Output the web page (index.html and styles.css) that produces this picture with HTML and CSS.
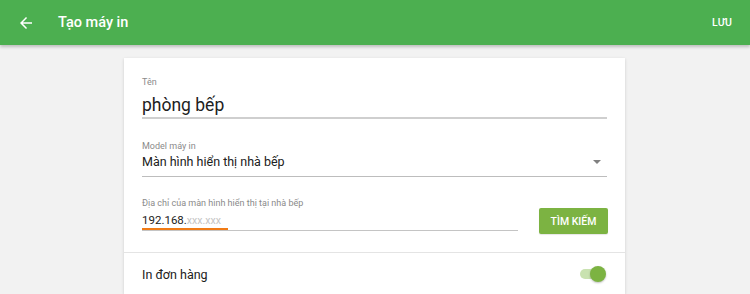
FILE: index.html
```html
<!DOCTYPE html>
<html lang="vi">
<head>
<meta charset="utf-8">
<title>Tạo máy in</title>
<link rel="stylesheet" href="styles.css">
</head>
<body>
<header class="appbar">
  <svg class="back" viewBox="0 0 24 24" width="18" height="18"><path d="M20 11H7.83l5.59-5.59L12 4l-8 8 8 8 1.41-1.41L7.83 13H20v-2z" fill="#fff"/></svg>
  <h1 class="title">Tạo máy in</h1>
  <span class="save">LƯU</span>
</header>
<main class="content">
  <section class="card">
    <div class="field field-name">
      <div class="label">Tên</div>
      <div class="name-input">phòng bếp</div>
    </div>
    <div class="field field-model">
      <div class="label">Model máy in</div>
      <div class="select"><span>Màn hình hiển thị nhà bếp</span><i class="caret"></i></div>
    </div>
    <div class="field-row">
      <div class="field field-addr">
        <div class="label">Địa chỉ của màn hình hiển thị tại nhà bếp</div>
        <div class="addr-input"><span class="addr-text">192.168.<span class="ph">xxx.xxx</span></span></div>
      </div>
      <button class="search">TÌM KIẾM</button>
    </div>
    <div class="divider"></div>
    <div class="toggle-row">
      <span class="toggle-label">In đơn hàng</span>
      <span class="switch"><span class="track"></span><span class="knob"></span></span>
    </div>
  </section>
</main>
</body>
</html>
```
FILE: styles.css
```css
* { box-sizing: border-box; }
html, body { margin: 0; padding: 0; }
body {
  background: #f2f2f2;
  font-family: Roboto, "Noto Sans", sans-serif;
  width: 750px;
  height: 294px;
  overflow: hidden;
}
.appbar {
  height: 45px;
  background: #4caf50;
  display: flex;
  align-items: center;
  padding: 0 18px 0 17px;
  box-shadow: 0 2px 3px rgba(0,0,0,0.22);
  position: relative;
  z-index: 1;
}
.back { display: block; }
.title {
  margin: 0 0 0 23px;
  font-size: 14.5px;
  font-weight: 500;
  color: #fff;
  flex: 1;
  line-height: 20px;
}
.save {
  font-size: 10.5px;
  font-weight: 500;
  color: #fff;
}
.content {
  padding: 13px 0 0 124px;
}
.card {
  width: 501px;
  height: 236px;
  background: #fff;
  box-shadow: 0 1px 3px rgba(0,0,0,0.15);
  padding-top: 18px;
}
.field { padding: 0 18px; }
.label {
  font-size: 9px;
  line-height: 12px;
  color: #8a8a8a;
}
.name-input {
  margin-top: 6px;
  font-size: 17.5px;
  line-height: 23px;
  color: #212121;
  border-bottom: 2px solid #cfcfcf;
}
.field-model { margin-top: 20.5px; }
.select {
  margin-top: 2px;
  display: flex;
  align-items: center;
  justify-content: space-between;
  font-size: 12.5px;
  line-height: 16px;
  color: #212121;
  padding-bottom: 6px;
  border-bottom: 1px solid #bdbdbd;
}
.caret {
  width: 0; height: 0;
  border-left: 4px solid transparent;
  border-right: 4px solid transparent;
  border-top: 4px solid #808080;
  margin-right: 6px;
}
.field-row {
  display: flex;
  align-items: flex-start;
  padding: 0 17px 0 18px;
  margin-top: 20.5px;
}
.field-addr { flex: 1; padding: 0; }
.addr-input {
  margin-top: 4px;
  font-size: 11.5px;
  line-height: 15px;
  color: #212121;
  border-bottom: 1px solid #c4c4c4;
}
.addr-text {
  display: inline-block;
  width: 86px;
  border-bottom: 2px solid #f07b16;
}
.ph { color: #c4c4c4; font-size: 10.5px; }
.search {
  margin: 11px 0 0 21px;
  width: 69px;
  height: 26px;
  border: none;
  border-radius: 2px;
  background: #7cb342;
  color: #fff;
  font-family: Roboto, sans-serif;
  font-size: 10.5px;
  font-weight: 500;
  padding: 0;
  box-shadow: 0 1px 1px rgba(0,0,0,0.1);
}
.divider {
  height: 1px;
  background: #e4e4e4;
  margin-top: 18px;
}
.toggle-row {
  display: flex;
  align-items: center;
  justify-content: space-between;
  padding: 11px 19px 0 18px;
}
.toggle-label {
  font-size: 12.5px;
  line-height: 16px;
  color: #212121;
  margin-top: 3px;
}
.switch {
  position: relative;
  width: 26px;
  height: 16px;
  display: block;
}
.track {
  position: absolute;
  left: 0; top: 3px;
  width: 22px; height: 10px;
  border-radius: 5px;
  background: #c9e2b0;
}
.knob {
  position: absolute;
  right: 0; top: 0;
  width: 16px; height: 16px;
  border-radius: 50%;
  background: #7cb342;
  box-shadow: 0 1px 2px rgba(0,0,0,0.25);
}
```
